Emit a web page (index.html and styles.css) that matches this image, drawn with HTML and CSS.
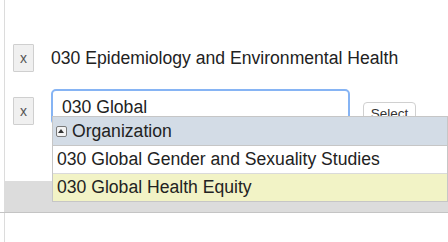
FILE: index.html
```html
<!DOCTYPE html>
<html>
    <head>
        <title>organizations</title>
        <link rel="stylesheet" href="styles.css">
    </head>
    <body>
        <div class="frame">
            <div class="row">
                <button class="remove">x</button>
                <span class="orgName">030 Epidemiology and Environmental Health</span>
            </div>
            <div class="row row-edit">
                <button class="remove remove-edit">x</button>
                <div class="field">
                    <input class="search" type="text" value="030 Global">
                    <!-- autocomplete menu -->
                    <div class="menu">
                        <div class="menuHead">
                            <span class="toggle"></span>
                            Organization
                        </div>
                        <div class="menuItem">030 Global Gender and Sexuality Studies</div>
                        <div class="menuItem menuItem-active">030 Global Health Equity</div>
                    </div>
                </div>
                <button class="selectBtn">Select</button>
            </div>
            <div class="band"></div>
            <div class="rule"></div>
        </div>
    </body>
</html>
```

FILE: styles.css
```css
html,body {
    margin:0;
}
body {
    font-family: "Liberation Sans", Arial, sans-serif;
    color: #222;
    overflow: hidden;
}
.frame {
    margin-left: 4px;
    border-left: 1px solid #dcdcdc;
    height: 242px;
    padding-top: 44px;
    box-sizing: border-box;
}
.row {
    display: flex;
    align-items: center;
    height: 28px;
    padding-left: 8px;
}
.remove {
    width: 21px;
    height: 28px;
    padding: 0;
    margin: 0 17px 0 0;
    background: #f0f0f0;
    border: 1px solid #cfcfcf;
    border-radius: 1px;
    color: #555;
    font-family: "Liberation Sans", Arial, sans-serif;
    font-size: 14px;
}
.orgName {
    font-size: 17.6px;
}
.row-edit {
    margin-top: 17px;
    height: 36px;
    align-items: flex-start;
}
.remove-edit {
    margin-top: 8px;
}
.field {
    position: relative;
}
.search {
    width: 299px;
    height: 36px;
    box-sizing: border-box;
    margin: 0;
    padding: 0 9px;
    border: 2px solid #86b4f4;
    border-radius: 5px;
    outline: none;
    font-family: "Liberation Sans", Arial, sans-serif;
    font-size: 17.6px;
    color: #222;
}
.selectBtn {
    margin: 13px 0 0 13px;
    width: 53px;
    height: 22px;
    padding: 0;
    background: #fff;
    border: 1px solid #d0d0d0;
    border-radius: 4px;
    font-family: "Liberation Sans", Arial, sans-serif;
    font-size: 13.5px;
    color: #333;
}
.menu {
    position: absolute;
    left: 1px;
    top: 27px;
    width: 394px;
    border: 1px solid #c6c6c6;
    background: #fff;
    z-index: 2;
}
.menuHead {
    display: flex;
    align-items: center;
    height: 28px;
    padding-left: 3px;
    background: #d3dce6;
    border-bottom: 1px solid #c6c6c6;
    font-size: 17.6px;
}
.toggle {
    position: relative;
    width: 9px;
    height: 9px;
    margin-right: 5px;
    border: 1px solid #7a7a7a;
    border-radius: 2px;
    background: #f4f4f4;
}
.toggle::after {
    content: "";
    position: absolute;
    left: 1px;
    top: 2px;
    border-left: 3.5px solid transparent;
    border-right: 3.5px solid transparent;
    border-bottom: 4px solid #333;
}
.menuItem {
    height: 27px;
    line-height: 27px;
    padding-left: 4px;
    font-size: 17.6px;
    border-bottom: 1px solid #dadada;
}
.menuItem-active {
    background: #f2f3c6;
    border-bottom: none;
}
.band {
    margin-top: 56px;
    height: 31px;
    background: #dcdcdc;
}
.rule {
    margin-left: -5px;
    height: 1px;
    background: #c4c4c4;
}
```
